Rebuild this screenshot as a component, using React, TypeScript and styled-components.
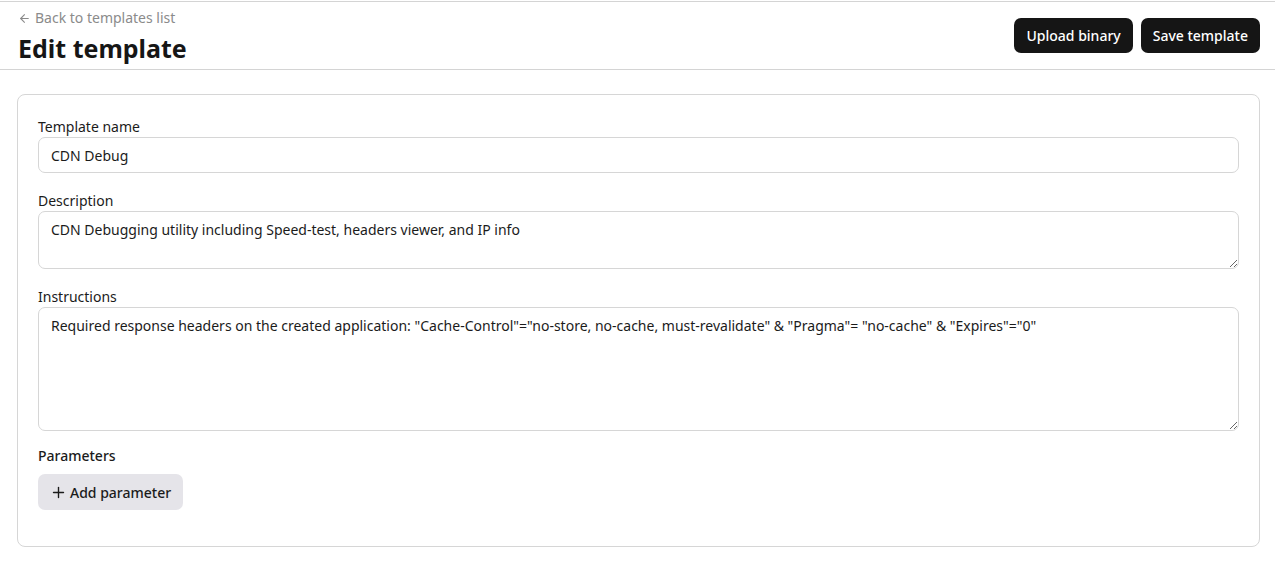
import React from "react";
import styled, { createGlobalStyle } from "styled-components";

const GlobalStyle = createGlobalStyle`
  html, body { margin: 0; padding: 0; background: #ffffff; }
  body {
    font-family: "Noto Sans", "Open Sans", "Liberation Sans", sans-serif;
    color: #1b1b1b;
    -webkit-font-smoothing: antialiased;
  }
  * { box-sizing: border-box; }
`;

const Page = styled.div`
  padding-top: 1px;
`;

const Header = styled.header`
  display: flex;
  align-items: flex-start;
  justify-content: space-between;
  border-top: 1px solid #d4d4d4;
  border-bottom: 1px solid #d4d4d4;
  padding: 6px 15px 5px 18px;
`;

const TitleBlock = styled.div`
  display: flex;
  flex-direction: column;
`;

const BackLink = styled.a`
  display: inline-flex;
  align-items: center;
  gap: 4px;
  font-size: 14px;
  line-height: 20px;
  color: #8b8b8b;
  text-decoration: none;
  cursor: pointer;
`;

const Title = styled.h1`
  margin: 4px 0 0 0;
  font-size: 25px;
  line-height: 32px;
  font-weight: 700;
  color: #161616;
`;

const Actions = styled.div`
  display: flex;
  gap: 8px;
  margin-top: 10px;
`;

const DarkButton = styled.button`
  height: 35px;
  padding: 0 12px;
  border: none;
  border-radius: 7px;
  background: #151515;
  color: #ffffff;
  font-family: inherit;
  font-size: 14px;
  font-weight: 500;
  line-height: 20px;
  cursor: pointer;
`;

const Main = styled.main`
  padding: 24px 15px 0 17px;
`;

const Card = styled.section`
  border: 1px solid #d6d6d6;
  border-radius: 8px;
  padding: 22px 20px 36px 20px;
  display: flex;
  flex-direction: column;
`;

const Field = styled.div<{ $gap?: number }>`
  display: flex;
  flex-direction: column;
  margin-top: ${(p) => p.$gap ?? 0}px;
`;

const Label = styled.label<{ $strong?: boolean }>`
  font-size: 14px;
  line-height: 20px;
  font-weight: ${(p) => (p.$strong ? 500 : 400)};
  color: #1b1b1b;
`;

const Input = styled.input`
  height: 36px;
  border: 1px solid #d6d6d6;
  border-radius: 7px;
  padding: 0 12px;
  font-family: inherit;
  font-size: 14px;
  color: #1b1b1b;
  background: #fff;
  outline: none;
`;

const TextArea = styled.textarea<{ $h: number }>`
  height: ${(p) => p.$h}px;
  border: 1px solid #d6d6d6;
  border-radius: 7px;
  padding: 8px 12px;
  font-family: inherit;
  font-size: 14px;
  line-height: 20px;
  color: #1b1b1b;
  background: #fff;
  outline: none;
  resize: vertical;
`;

const SoftButton = styled.button`
  align-self: flex-start;
  margin-top: 8px;
  height: 36px;
  padding: 0 12px 0 13px;
  display: inline-flex;
  align-items: center;
  gap: 4px;
  border: none;
  border-radius: 7px;
  background: #e5e4e9;
  color: #1b1b1b;
  font-family: inherit;
  font-size: 14px;
  font-weight: 500;
  cursor: pointer;
`;

const ArrowLeft = () => (
  <svg width="13" height="13" viewBox="0 0 24 24" fill="none" stroke="currentColor" strokeWidth="2" strokeLinecap="round" strokeLinejoin="round">
    <path d="M19 12H5" />
    <path d="M12 19l-7-7 7-7" />
  </svg>
);

const Plus = () => (
  <svg width="15" height="15" viewBox="0 0 24 24" fill="none" stroke="currentColor" strokeWidth="2.2" strokeLinecap="round">
    <path d="M12 4v16" />
    <path d="M4 12h16" />
  </svg>
);

export default function App() {
  return (
    <>
      <GlobalStyle />
      <Page>
        <Header>
          <TitleBlock>
            <BackLink>
              <ArrowLeft />
              Back to templates list
            </BackLink>
            <Title>Edit template</Title>
          </TitleBlock>
          <Actions>
            <DarkButton>Upload binary</DarkButton>
            <DarkButton>Save template</DarkButton>
          </Actions>
        </Header>
        <Main>
          <Card>
            <Field>
              <Label>Template name</Label>
              <Input defaultValue="CDN Debug" />
            </Field>
            <Field $gap={18}>
              <Label>Description</Label>
              <TextArea
                $h={58}
                defaultValue="CDN Debugging utility including Speed-test, headers viewer, and IP info"
              />
            </Field>
            <Field $gap={18}>
              <Label>Instructions</Label>
              <TextArea
                $h={124}
                defaultValue={'Required response headers on the created application: "Cache-Control"="no-store, no-cache, must-revalidate" & "Pragma"= "no-cache" & "Expires"="0"'}
              />
            </Field>
            <Field $gap={15}>
              <Label $strong>Parameters</Label>
              <SoftButton>
                <Plus />
                Add parameter
              </SoftButton>
            </Field>
          </Card>
        </Main>
      </Page>
    </>
  );
}
